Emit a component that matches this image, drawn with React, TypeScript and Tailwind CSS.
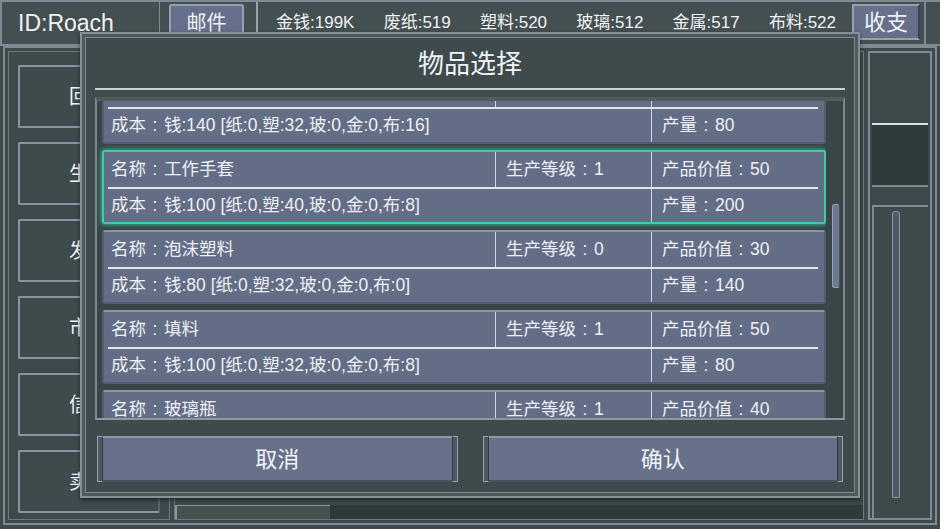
import React from 'react'

type Product = {
  name: string
  level: number
  value: number
  money: number
  paper: number
  plastic: number
  glass: number
  metal: number
  cloth: number
  output: number
}

const products: Product[] = [
  { name: '塑料袋', level: 0, value: 20, money: 140, paper: 0, plastic: 32, glass: 0, metal: 0, cloth: 16, output: 80 },
  { name: '工作手套', level: 1, value: 50, money: 100, paper: 0, plastic: 40, glass: 0, metal: 0, cloth: 8, output: 200 },
  { name: '泡沫塑料', level: 0, value: 30, money: 80, paper: 0, plastic: 32, glass: 0, metal: 0, cloth: 0, output: 140 },
  { name: '填料', level: 1, value: 50, money: 100, paper: 0, plastic: 32, glass: 0, metal: 0, cloth: 8, output: 80 },
  { name: '玻璃瓶', level: 1, value: 40, money: 90, paper: 0, plastic: 0, glass: 40, metal: 0, cloth: 0, output: 120 },
]

const resources = [
  ['金钱', '199K'],
  ['废纸', '519'],
  ['塑料', '520'],
  ['玻璃', '512'],
  ['金属', '517'],
  ['布料', '522'],
]

const sideButtons = ['回收', '生产', '发展', '市场', '信息', '卖出']

function Field({ label, value }: { label: string; value: React.ReactNode }) {
  return (
    <span className="whitespace-nowrap">
      {label}
      <span className="inline-block w-[18px] text-center">:</span>
      {value}
    </span>
  )
}

function ProductCard({ p, selected }: { p: Product; selected?: boolean }) {
  const cost = `钱:${p.money} [纸:${p.paper},塑:${p.plastic},玻:${p.glass},金:${p.metal},布:${p.cloth}]`
  return (
    <div
      className={
        selected
          ? 'h-[74px] shrink-0 rounded-[3px] border-2 border-[#3fcaa8] bg-[#636d86] shadow-[0_0_4px_1px_#2fae90]'
          : 'h-[74px] shrink-0 rounded-[3px] border-2 border-[#535c72] border-t-[#8d93ab] bg-[#636d86]'
      }
    >
      <div className="flex h-[35px] items-center text-[17.5px] text-[#eef0f4]">
        <div className="flex h-full w-[391px] items-center pl-[7px]">
          <Field label="名称" value={p.name} />
        </div>
        <div className="flex h-full w-[156px] items-center border-l border-[#cfd4de] pl-[10px]">
          <Field label="生产等级" value={p.level} />
        </div>
        <div className="flex h-full flex-1 items-center border-l border-[#cfd4de] pl-[10px]">
          <Field label="产品价值" value={p.value} />
        </div>
      </div>
      <div className="ml-[4px] mr-[6px] h-[2px] bg-[#dfe3ea]" />
      <div className="flex h-[33px] items-center text-[17.5px] text-[#eef0f4]">
        <div className="flex h-full w-[547px] items-center pl-[7px]">
          <Field label="成本" value={cost} />
        </div>
        <div className="flex h-full flex-1 items-center border-l border-[#cfd4de] pl-[10px]">
          <Field label="产量" value={p.output} />
        </div>
      </div>
    </div>
  )
}

function DialogButton({ label }: { label: string }) {
  return (
    <button type="button" className="flex h-[46px] flex-1 items-stretch">
      <span className="w-[6px] border border-[#9aa2ae] border-r-[#2f3a3c] bg-[#4e5967]" />
      <span className="flex flex-1 items-center justify-center border-t-2 border-b-2 border-[#8e96aa] border-b-[#4a5262] bg-[#67718a] text-[22px] text-[#f1f3f6]">
        {label}
      </span>
      <span className="w-[6px] border border-[#9aa2ae] border-l-[#2f3a3c] bg-[#4e5967]" />
    </button>
  )
}

function ItemDialog() {
  return (
    <div className="absolute left-[80px] top-[32px] flex h-[466px] w-[780px] flex-col border-2 border-[#86909b] bg-[#3e4a4b] shadow-[inset_0_0_0_3px_#4d595b,inset_0_0_0_4px_#7d8791,0_2px_4px_rgba(0,0,0,0.5)]">
      <div className="flex h-[54px] items-center justify-center pt-[6px] text-[26px] text-[#f1f3f4]">
        物品选择
      </div>
      <div className="mx-[13px] h-[2px] bg-[#c9d2cd]" />
      <div className="mx-[13px] mt-[7px] flex h-[323px] border-2 border-t-4 border-[#7c8792] border-t-[#4f5b5d] border-b-[#8e98a2] bg-[#394546]">
        <div className="flex-1 overflow-hidden pl-[5px]">
          {/* list is scrolled a little past the first entry */}
          <div className="-mt-[31px] flex flex-col gap-[6px]">
            {products.map((p, i) => (
              <ProductCard key={p.name} p={p} selected={i === 1} />
            ))}
          </div>
        </div>
        <div className="relative w-[17px]">
          <div className="absolute left-[6px] top-[103px] h-[84px] w-[8px] rounded-[3px] border border-[#9aa3b6] border-r-[#4a5262] bg-[#6d7891]" />
        </div>
      </div>
      <div className="mt-[16px] flex gap-[25px] px-[15px]">
        <DialogButton label="取消" />
        <DialogButton label="确认" />
      </div>
    </div>
  )
}

export default function App() {
  return (
    <div className="relative h-[529px] w-[940px] overflow-hidden bg-[#3d494a] font-['Liberation_Sans','Noto_Sans_CJK_SC',sans-serif] text-[#f1f3f6]">
      {/* top bar */}
      <header className="flex h-[46px] items-stretch border-t-2 border-b-2 border-[#7f8a94] bg-[#434f50]">
        <div className="flex w-[160px] items-center border-l-2 border-r border-[#7f8a94] pl-[16px] text-[23px]">ID:Roach</div>
        <div className="flex items-start pl-[9px] pt-[2px]">
          <div className="flex h-[38px] w-[75px] items-center justify-center rounded-t-[3px] border-2 border-[#98a1b0] border-b-[#4c5564] bg-[#66708a] text-[20px]">
            邮件
          </div>
        </div>
        <div className="ml-[12px] w-[2px] bg-[#9aa3ad]" />
        <div className="ml-[18px] flex w-[560px] items-center justify-between text-[17px]">
          {resources.map(([k, v]) => (
            <span key={k}>
              {k}:{v}
            </span>
          ))}
        </div>
        <div className="ml-[16px] flex items-start pt-[2px]">
          <div className="flex h-[36px] w-[68px] items-center justify-center border-2 border-[#98a1b0] border-r-[#3a4450] bg-[#66708a] text-[22px]">
            收支
          </div>
        </div>
        <div className="ml-[4px] flex-1 border-l-2 border-[#7f8a94]" />
      </header>

      {/* main area behind the dialog */}
      <main className="mx-[3px] flex h-[479px] gap-[4px] border-2 border-[#7f8a94] p-[3px]">
        <aside className="flex w-[162px] flex-col gap-[14px] border border-[#6d7780] px-[9px] pt-[13px]">
          {sideButtons.map(label => (
            <div
              key={label}
              className="flex h-[63px] shrink-0 items-center justify-center rounded-[2px] border-2 border-[#8a94a0] border-r-[#59636b] bg-[#3e4a4b] text-[20px]"
            >
              {label}
            </div>
          ))}
        </aside>
        <section className="flex flex-1 flex-col border border-[#6d7780]">
          <div className="flex-1" />
          <div className="flex h-[14px] items-stretch">
            <div className="w-[155px] border-l-2 border-t border-[#8a94a0] bg-[#46524f]" />
            <div className="flex-1 bg-[#2e3a3a]" />
          </div>
        </section>
        <aside className="flex w-[64px] flex-col border-2 border-[#7f8a94] px-[2px] pt-[12px]">
          <div className="h-[60px] border-b-2 border-[#d9dee0]" />
          <div className="h-[62px] border-b-2 border-[#7d8790] bg-[#2e3a3a]" />
          <div className="mt-[18px] flex flex-1 justify-end border-l-2 border-t-2 border-[#7f8a94] pb-[20px] pr-[28px] pt-[4px]">
            <div className="w-[8px] rounded-t-[3px] border border-[#8a94a0] bg-[#4f5868]" />
          </div>
        </aside>
      </main>

      <ItemDialog />
    </div>
  )
}
